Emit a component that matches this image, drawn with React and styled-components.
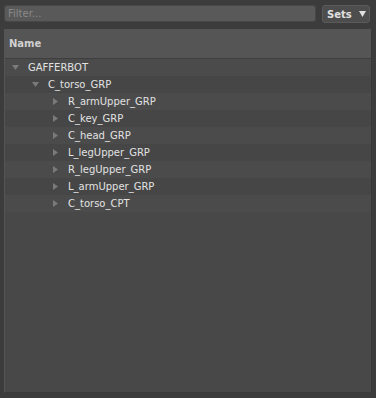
import React from "react"
import styled, { createGlobalStyle } from "styled-components"

const Global = createGlobalStyle`
  html, body {
    margin: 0;
    padding: 0;
    background: #3c3c3c;
  }
  body {
    font-family: "DejaVu Sans", "Liberation Sans", sans-serif;
    font-size: 10px;
  }
`;

const Page = styled.div`
  width: 376px;
  height: 398px;
  box-sizing: border-box;
  padding: 5px 4px 5px 4px;
  display: flex;
  flex-direction: column;
  gap: 6px;
`;

const Toolbar = styled.div`
  display: flex;
  align-items: stretch;
  gap: 6px;
  height: 18px;
`;

const Filter = styled.input`
  flex: 1;
  min-width: 0;
  box-sizing: border-box;
  height: 17px;
  margin: 0;
  padding: 0 3px;
  border: 1px solid #474747;
  border-radius: 3px;
  background: #595959;
  color: #ddd;
  font-family: inherit;
  font-size: 10px;
  outline: none;
  &::placeholder {
    color: #8a8a8a;
  }
`;

const SetsButton = styled.button`
  width: 48px;
  box-sizing: border-box;
  margin: 0 2px 0 0;
  padding: 0 0 0 4px;
  border: 1px solid #5a5a5a;
  border-radius: 3px;
  background: #4d4d4d;
  color: #e0e0e0;
  font-family: inherit;
  font-size: 10px;
  font-weight: bold;
  display: flex;
  align-items: center;
  gap: 7px;
`;

const Panel = styled.div`
  flex: 1;
  display: flex;
  flex-direction: column;
  background: #484848;
  border-left: 1px solid #555;
  border-right: 1px solid #383838;
  border-bottom: 1px solid #3a3a3a;
`;

const Header = styled.div`
  height: 29px;
  display: flex;
  align-items: center;
  padding-left: 4px;
  background: #555;
  border-bottom: 1px solid #3e3e3e;
  color: #d0d0d0;
  font-weight: bold;
  font-size: 10px;
`;

const Row = styled.div`
  height: 17px;
  display: flex;
  align-items: center;
  padding-left: ${p => 7 + p.$depth * 20}px;
  background: ${p => (p.$odd ? "#464646" : "#4b4b4b")};
  color: #e2e2e2;
`;

const Toggle = styled.span`
  width: 7px;
  margin-right: 9px;
  display: flex;
  align-items: center;
  justify-content: center;
`;

const Arrow = ({ open }) =>
  open ? (
    <svg width="7" height="5" viewBox="0 0 7 5">
      <path d="M0 0 L7 0 L3.5 5 Z" fill="#7a7a7a" />
    </svg>
  ) : (
    <svg width="5" height="7" viewBox="0 0 5 7">
      <path d="M0 0 L5 3.5 L0 7 Z" fill="#7a7a7a" />
    </svg>
  );

const items = [
  { name: "GAFFERBOT", depth: 0, open: true },
  { name: "C_torso_GRP", depth: 1, open: true },
  { name: "R_armUpper_GRP", depth: 2 },
  { name: "C_key_GRP", depth: 2 },
  { name: "C_head_GRP", depth: 2 },
  { name: "L_legUpper_GRP", depth: 2 },
  { name: "R_legUpper_GRP", depth: 2 },
  { name: "L_armUpper_GRP", depth: 2 },
  { name: "C_torso_CPT", depth: 2 },
];

export default function App() {
  return (
    <>
      <Global />
      <Page>
        <Toolbar>
          <Filter placeholder="Filter..." />
          <SetsButton>
            Sets
            <svg width="7" height="6" viewBox="0 0 7 6">
              <path d="M0 0 L7 0 L3.5 6 Z" fill="#e0e0e0" />
            </svg>
          </SetsButton>
        </Toolbar>
        <Panel>
          <Header>Name</Header>
          {items.map((it, i) => (
            <Row key={it.name} $depth={it.depth} $odd={i % 2 === 1}>
              <Toggle>
                <Arrow open={it.open} />
              </Toggle>
              {it.name}
            </Row>
          ))}
        </Panel>
      </Page>
    </>
  );
}
